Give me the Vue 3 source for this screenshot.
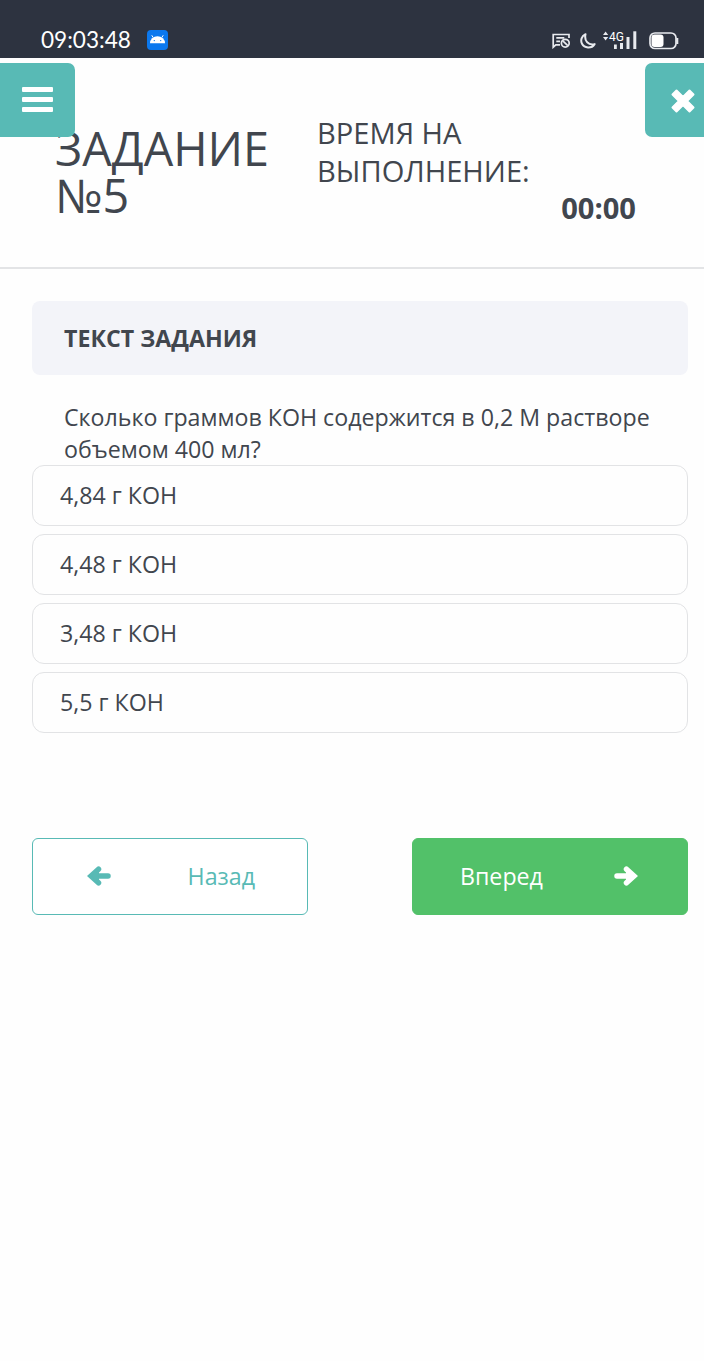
<template>
  <div class="page">
    <header class="statusBar">
      <span class="clock">09:03:48</span>
      <svg class="android" viewBox="0 0 21 20">
        <rect width="21" height="20" rx="4" fill="#0b78ee" />
        <path d="M3 13.200a7.500 7 0 0 1 15 0z" fill="#fff" />
        <path d="M6.200 7.600L4.800 5.300M14.800 7.600l1.400-2.300" stroke="#fff" stroke-width="1" />
        <circle cx="7.300" cy="10.600" r=".7" fill="#0b78ee" />
        <circle cx="13.700" cy="10.600" r=".7" fill="#0b78ee" />
      </svg>
      <div class="indicators">
        <svg class="message" viewBox="0 0 19 16" fill="none" stroke="#e8eaee" stroke-width="1.7">
          <path d="M17 5V1.5H1.2v12.7l2.6-2.4H8M4.3 4.9h8M4.3 8.3H8" />
          <circle cx="13.3" cy="10.2" r="3.9" />
          <path d="M10.8 7.8l5 4.8" />
        </svg>
        <svg class="moon" viewBox="0 0 16 16" fill="none" stroke="#e8eaee" stroke-width="2">
          <path d="M5.500 1.200C1.500 3 .3 7.500 2 10.800c2.300 4.500 9.500 5.200 12.600.3C8.500 12.500 4 8 5.500 1.200z" stroke-linejoin="round" />
        </svg>
        <div class="signal">
          <svg viewBox="0 0 34 20" fill="#e8eaee">
            <path d="M0 5l2.600-3.400L5.200 5zM0 7h5.200L2.600 10.400z" />
            <rect x="11" y="14.500" width="2.800" height="4.500" />
            <rect x="17" y="13" width="3" height="6" />
            <rect x="23.500" y="7" width="3" height="12" />
            <rect x="30.300" y="1.300" width="3" height="17.700" />
          </svg>
          <span>4G</span>
        </div>
        <svg class="battery" viewBox="0 0 30 18">
          <rect x="1" y="1" width="26" height="15.500" rx="5" fill="none" stroke="#e8eaee" stroke-width="1.700" />
          <rect x="2.500" y="2.500" width="12" height="12.500" rx="3" fill="#fff" />
          <path d="M28.300 6v6" stroke="#e8eaee" stroke-width="2" />
        </svg>
      </div>
    </header>

    <section class="taskHeader">
      <button class="corner menu">
        <svg viewBox="0 0 31 26" fill="#fff">
          <rect y="0" width="31" height="5" rx="1" />
          <rect y="10" width="31" height="5" rx="1" />
          <rect y="20" width="31" height="5" rx="1" />
        </svg>
      </button>
      <button class="corner close">
        <svg viewBox="0 0 24 24" fill="none" stroke="#fff" stroke-linejoin="round">
          <path d="M4 4l16 16M20 4L4 20" stroke-width="6.500" />
          <path d="M5.500 1.500l-4 4L8 12l-6.500 6.500 4 4L12 16l6.500 6.500 4-4L16 12l6.500-6.500-4-4L12 8z" fill="#fff" stroke-width="2" />
        </svg>
      </button>
      <h1 class="title">ЗАДАНИЕ №5</h1>
      <div class="timer">
        <span class="timerLabel">ВРЕМЯ НА ВЫПОЛНЕНИЕ:</span>
        <b class="timerValue">{{ time }}</b>
      </div>
    </section>

    <main class="task">
      <h2 class="caption">ТЕКСТ ЗАДАНИЯ</h2>
      <p class="question">Сколько граммов КОН содержится в 0,2 М растворе объемом 400 мл?</p>
      <ul class="answers">
        <li
          v-for="(item, index) in answers"
          :key="item"
          :class="['answer', active === index ? 'active' : '']"
          @click="active = index"
        >{{ item }}</li>
      </ul>
      <nav class="controls">
        <button class="btn back">
          <svg viewBox="0 0 24 20" fill="none" stroke="currentColor" stroke-width="5.500">
            <path d="M21 10H5M11.500 3.200L4 10l7.500 6.800" stroke-linecap="round" />
            <path d="M4.500 10l7-6v12z" stroke-width="1" fill="currentColor" />
          </svg>
          <span>Назад</span>
        </button>
        <button class="btn forward">
          <span>Вперед</span>
          <svg viewBox="0 0 24 20" fill="none" stroke="currentColor" stroke-width="5.500">
            <path d="M3 10H19M12.500 3.200L20 10l-7.500 6.800" stroke-linecap="round" />
            <path d="M19.500 10l-7-6v12z" stroke-width="1" fill="currentColor" />
          </svg>
        </button>
      </nav>
    </main>
  </div>
</template>

<script setup>
import { ref } from "vue";

const time = ref("00:00");
const answers = ["4,84 г КОН", "4,48 г КОН", "3,48 г КОН", "5,5 г КОН"];
// выбранный вариант ответа
const active = ref(-1);
</script>

<style>
body {
  margin: 0;
  background: #fff;
}
</style>

<style scoped>
.page {
  min-height: 1361px;
  background: #fefefe;
  color: #41464e;
  font-family: "Open Sans", "Noto Sans", sans-serif;
  font-size: 23.2px;
}
svg {
  display: block;
  flex: none;
}
button {
  font: inherit;
  padding: 0;
  cursor: pointer;
}
/* строка состояния */
.statusBar {
  box-sizing: border-box;
  height: 58px;
  padding: 20px 25px 0 41px;
  display: flex;
  align-items: center;
  background: #2d3340;
  color: #fff;
}
.clock {
  width: 106px;
  margin-top: 2px;
  font-family: Lato, sans-serif;
  font-size: 22.6px;
  line-height: 34px;
}
.android {
  width: 21px;
  height: 20px;
  margin-top: 2px;
}
.indicators {
  margin-left: auto;
  display: flex;
  align-items: center;
}
.message {
  width: 19px;
  height: 16px;
  margin-top: 3px;
}
.moon {
  width: 16px;
  height: 16px;
  margin: 3px 7px 0 9px;
}
.signal {
  position: relative;
  width: 34px;
  margin-top: 2px;
}
.signal svg {
  width: 34px;
  height: 20px;
}
.signal span {
  position: absolute;
  left: 6px;
  top: 1px;
  font: 12px/12px Roboto, sans-serif;
}
.battery {
  width: 30px;
  height: 18px;
  margin: 3px 0 0 12px;
}
/* шапка задания */
.taskHeader {
  position: relative;
  box-sizing: border-box;
  height: 211px;
  padding: 56px 68px 0 55px;
  display: flex;
  align-items: flex-start;
  border-bottom: 2px solid #e3e4e6;
}
.corner {
  position: absolute;
  top: 5px;
  height: 74px;
  border: 0;
  background: #58bab5;
  display: flex;
  align-items: center;
}
.menu {
  left: 0;
  width: 75px;
  padding-left: 22px;
  border-radius: 0 7px 7px 0;
}
.menu svg {
  width: 31px;
  height: 26px;
}
.close {
  right: 0;
  width: 59px;
  padding: 2px 0 0 26px;
  border-radius: 7px 0 0 7px;
}
.close svg {
  width: 24px;
  height: 24px;
}
.title {
  width: 262px;
  margin: 11px 0 0;
  font-size: 46.7px;
  font-weight: 400;
  line-height: 47px;
}
.timer {
  flex: 1;
  display: flex;
  flex-direction: column;
  font-size: 29.1px;
  line-height: 38px;
}
.timerLabel {
  width: 230px;
}
.timerValue {
  align-self: flex-end;
  line-height: 36px;
}
/* текст и варианты */
.task {
  padding: 32px 16px 0 32px;
}
.caption {
  margin: 0;
  padding-left: 32px;
  border-radius: 8px;
  background: #f3f4f9;
  font-size: 23.2px;
  font-weight: 700;
  line-height: 74px;
}
.question {
  margin: 26px 0 0;
  padding: 0 32px;
  line-height: 32px;
}
.answers {
  margin: 0;
  padding: 0;
  list-style: none;
  display: flex;
  flex-direction: column;
  gap: 8px;
}
.answer {
  box-sizing: border-box;
  height: 61.1px;
  padding-left: 27px;
  border: 1px solid #e2e3e5;
  border-radius: 12px;
  line-height: 59.6px;
  cursor: pointer;
}
.answer.active {
  border-color: #58bab5;
}
/* кнопки навигации */
.controls {
  margin-top: 104.6px;
  display: flex;
  justify-content: space-between;
}
.btn {
  box-sizing: border-box;
  width: 276px;
  height: 77px;
  display: flex;
  align-items: center;
  justify-content: space-between;
  border: 1px solid #58bab5;
  border-radius: 6px;
}
.btn svg {
  width: 24px;
  height: 20px;
}
.btn span {
  margin-bottom: 1px;
}
.back {
  padding: 0 52px 0 54px;
  background: #fff;
  color: #58bab5;
}
.forward {
  padding: 0 49px 0 47px;
  border-color: #52c169;
  background: #52c169;
  color: #fff;
}
</style>
